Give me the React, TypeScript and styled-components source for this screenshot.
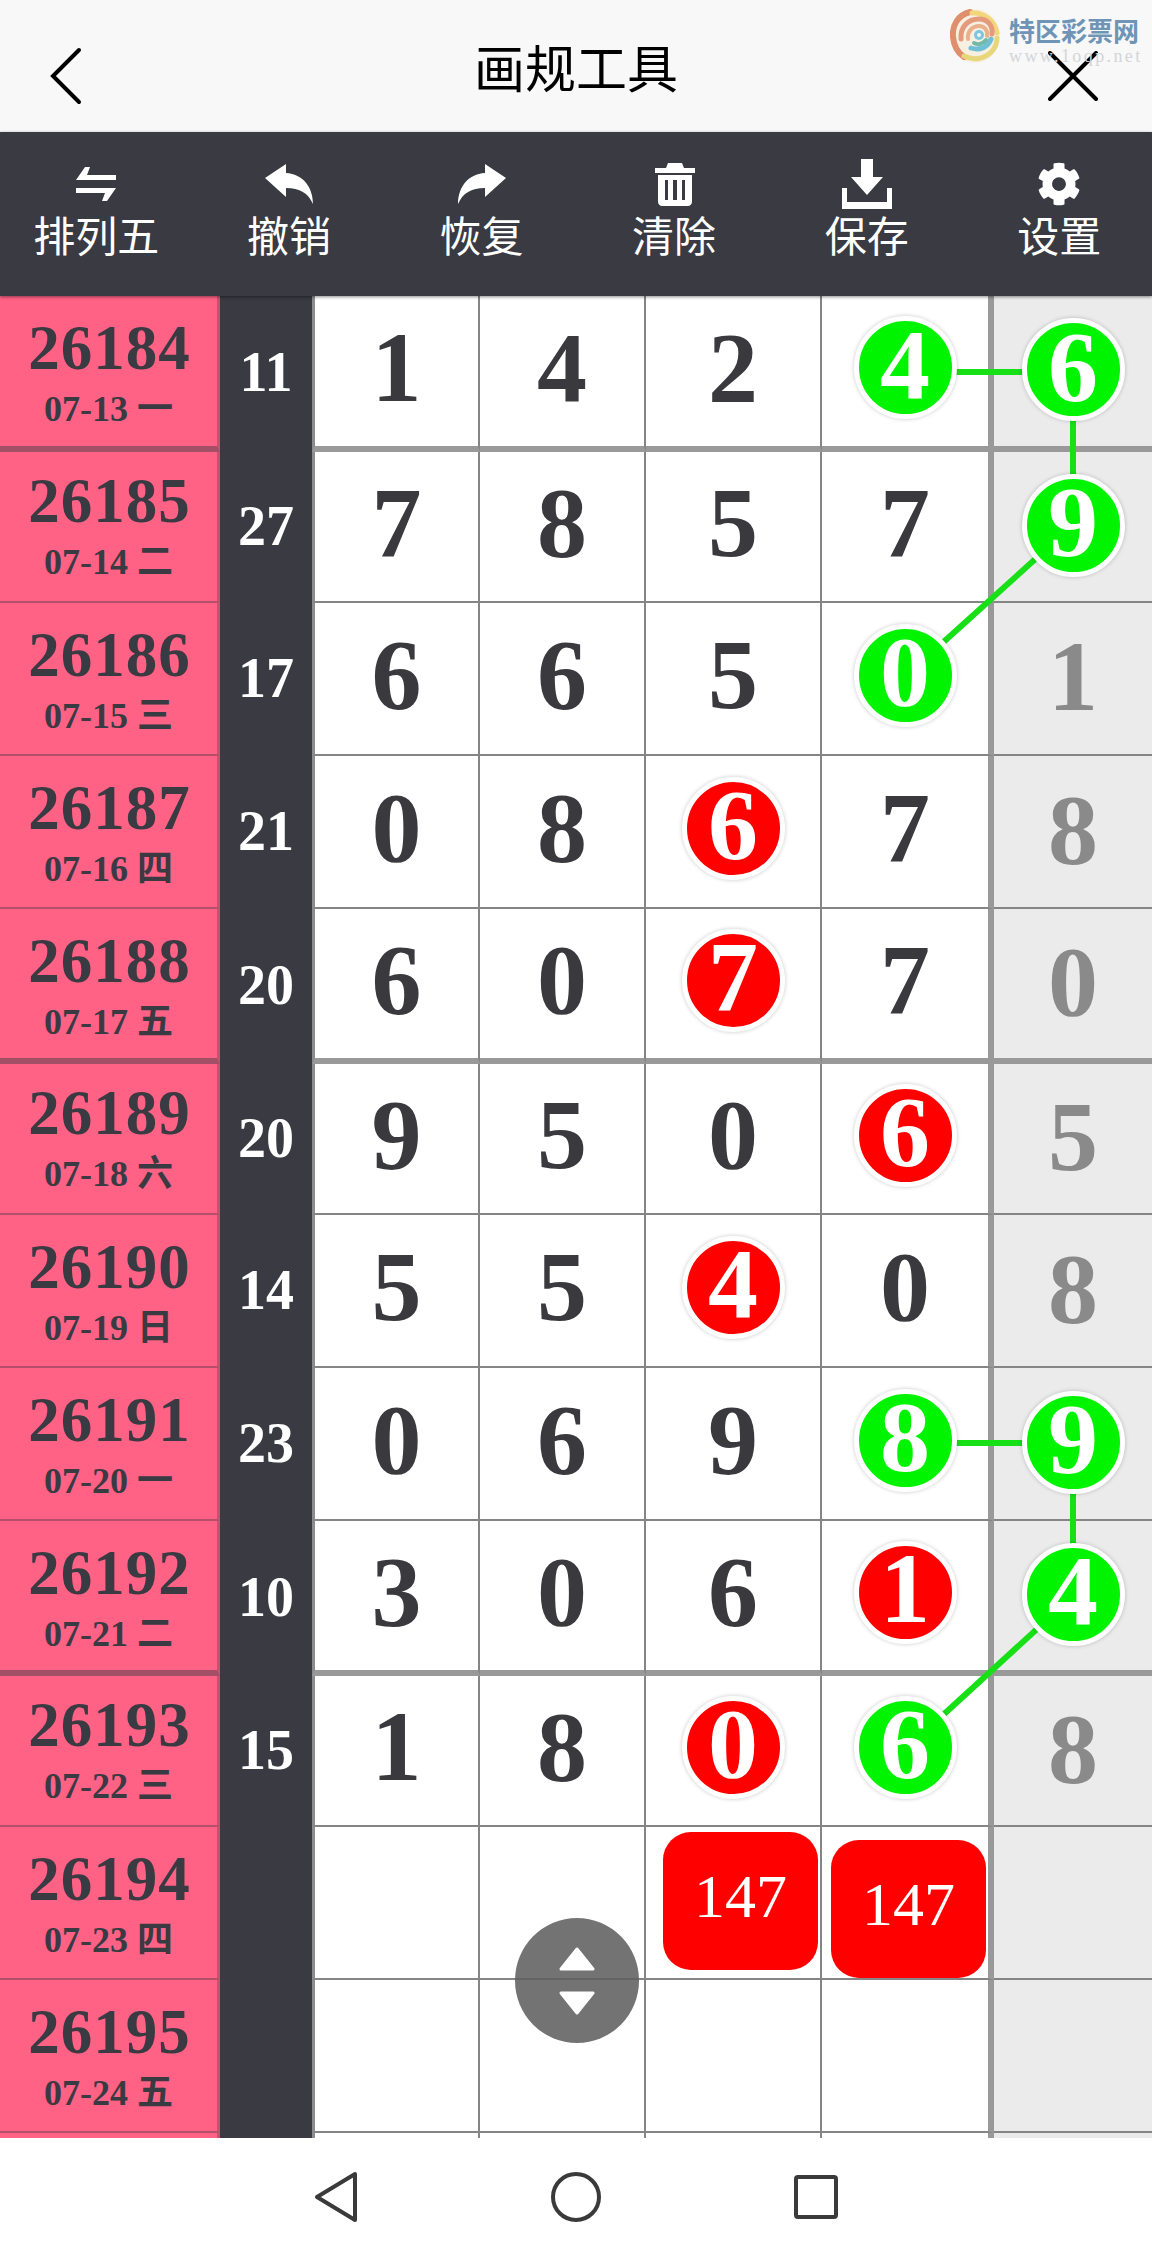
import React from 'react'
import styled, { createGlobalStyle } from 'styled-components'
import { FaCog } from 'react-icons/fa'

const SERIF = '"Liberation Serif", "Noto Sans CJK SC", serif'
const SANS = '"Noto Sans CJK SC", "Noto Sans", sans-serif'

type Ball = 'g' | 'r'
type Pick = { value: string; ball?: Ball }

const g = (value: string): Pick => ({ value, ball: 'g' })
const r = (value: string): Pick => ({ value, ball: 'r' })
const n = (value: string): Pick => ({ value })

const rows: { period: string; date: string; sum?: string; cells: Pick[]; height: number; thick?: boolean }[] = [
  { period: '26184', date: '07-13 一', sum: '11', cells: [n('1'), n('4'), n('2'), g('4'), g('6')], height: 156, thick: true },
  { period: '26185', date: '07-14 二', sum: '27', cells: [n('7'), n('8'), n('5'), n('7'), g('9')], height: 151 },
  { period: '26186', date: '07-15 三', sum: '17', cells: [n('6'), n('6'), n('5'), g('0'), n('1')], height: 153 },
  { period: '26187', date: '07-16 四', sum: '21', cells: [n('0'), n('8'), r('6'), n('7'), n('8')], height: 153 },
  { period: '26188', date: '07-17 五', sum: '20', cells: [n('6'), n('0'), r('7'), n('7'), n('0')], height: 155, thick: true },
  { period: '26189', date: '07-18 六', sum: '20', cells: [n('9'), n('5'), n('0'), r('6'), n('5')], height: 151 },
  { period: '26190', date: '07-19 日', sum: '14', cells: [n('5'), n('5'), r('4'), n('0'), n('8')], height: 153 },
  { period: '26191', date: '07-20 一', sum: '23', cells: [n('0'), n('6'), n('9'), g('8'), g('9')], height: 153 },
  { period: '26192', date: '07-21 二', sum: '10', cells: [n('3'), n('0'), n('6'), r('1'), g('4')], height: 155, thick: true },
  { period: '26193', date: '07-22 三', sum: '15', cells: [n('1'), n('8'), r('0'), g('6'), n('8')], height: 151 },
  { period: '26194', date: '07-23 四', cells: [n(''), n(''), n(''), n(''), n('')], height: 153 },
  { period: '26195', date: '07-24 五', cells: [n(''), n(''), n(''), n(''), n('')], height: 153 },
]

const tools = [
  { label: '排列五', shift: 0 },
  { label: '撤销', shift: 1 },
  { label: '恢复', shift: 1 },
  { label: '清除', shift: 2 },
  { label: '保存', shift: 0 },
  { label: '设置', shift: 0 },
]

const GlobalStyle = createGlobalStyle`
  html, body {
    margin: 0;
    padding: 0;
    background: #fff;
  }
  * {
    box-sizing: border-box;
  }
`

const Page = styled.div`
  width: 1152px;
  height: 2256px;
  overflow: hidden;
  display: flex;
  flex-direction: column;
  background: #fff;
`

const Header = styled.header`
  position: relative;
  height: 132px;
  flex: none;
  background: #f8f8f8;
  display: flex;
  align-items: center;
  justify-content: space-between;
  padding: 0 54px 0 50px;
`

const Title = styled.h1`
  position: absolute;
  left: 0;
  right: 0;
  top: 32px;
  margin: 0;
  text-align: center;
  font: 400 51px/68px ${SANS};
  color: #000;
`

const HeadIcon = styled.svg`
  display: block;
  margin-top: 19px;
`

const Logo = styled.div`
  position: absolute;
  left: 950px;
  top: 9px;
  display: flex;
  gap: 8px;
`

const LogoText = styled.div`
  display: flex;
  flex-direction: column;
`

const LogoName = styled.span`
  font: 700 26px/30px ${SANS};
  color: #6f94b5;
  margin-top: 6px;
  white-space: nowrap;
`

const LogoUrl = styled.span`
  font: 400 18px/18px ${SERIF};
  letter-spacing: 2.4px;
  color: #d3d5d8;
  margin-top: 2px;
  white-space: nowrap;
`

const Toolbar = styled.nav`
  position: relative;
  z-index: 3;
  height: 164px;
  flex: none;
  display: grid;
  grid-template-columns: repeat(6, 192.6px);
  background: #393a42;
  box-shadow: 0 1px 3px rgba(0, 0, 0, 0.45);
`

const Tool = styled.div`
  display: flex;
  flex-direction: column;
  align-items: center;
  padding-top: 27px;
  color: #fff;
`

const ToolIcon = styled.div<{ $shift: number }>`
  height: 50px;
  display: flex;
  align-items: center;
  justify-content: center;
  margin-left: ${({ $shift }) => $shift}px;
`

const ToolLabel = styled.span`
  font: 400 42px/56px ${SANS};
  margin-top: -3px;
  white-space: nowrap;
`

const Board = styled.main`
  position: relative;
  height: 1842px;
  flex: none;
  overflow: hidden;
`

const Row = styled.div<{ $height: number }>`
  display: grid;
  grid-template-columns: 220px 92px 168px 166px 176px 172px 158px;
  height: ${({ $height }) => $height}px;
`

// the row under a thick rule starts lower, so its text sits higher in the box
const PeriodCell = styled.div<{ $thick?: boolean; $afterThick?: boolean }>`
  display: flex;
  flex-direction: column;
  align-items: center;
  background: #ff6285;
  border-right: 3px solid #c3536f;
  border-bottom: ${({ $thick }) => ($thick ? '6px solid #a34f66' : '2px solid #b34f6a')};
  padding-top: ${({ $afterThick }) => ($afterThick ? '16px' : '19px')};
  color: #393a42;
`

const Period = styled.span`
  font: 700 63px/66px ${SERIF};
  letter-spacing: 1px;
  margin-left: 2px;
`

const DateLabel = styled.span`
  font: 700 36px/40px ${SERIF};
  margin-top: 8px;
  white-space: nowrap;
`

const SumCell = styled.div`
  display: flex;
  align-items: center;
  justify-content: center;
  background: #393a42;
  color: #fff;
  font: 700 56px/60px ${SERIF};
  padding-bottom: 4px;
`

const Cell = styled.div<{ $thick?: boolean; $first?: boolean; $last?: boolean; $side?: boolean }>`
  position: relative;
  display: flex;
  align-items: center;
  justify-content: center;
  background: ${({ $side }) => ($side ? '#ebebeb' : '#fff')};
  color: ${({ $side }) => ($side ? '#8a8a8a' : '#3a3a3e')};
  font: 700 100px/1 ${SERIF};
  padding-bottom: ${({ $side }) => ($side ? '3px' : '7px')};
  border-bottom: ${({ $thick }) => ($thick ? '6px solid #999' : '2px solid #858585')};
  border-left: ${({ $first }) => ($first ? '3px solid #8c8c8c' : 'none')};
  border-right: ${({ $last, $side }) => ($side ? 'none' : $last ? '6px solid #999' : '2px solid #858585')};
`

const BallMark = styled.div<{ $kind: Ball }>`
  position: relative;
  z-index: 2;
  width: 103px;
  height: 103px;
  flex: none;
  display: flex;
  align-items: center;
  justify-content: center;
  border-radius: 50%;
  border: 5px solid #fff;
  box-shadow: 0 0 4px rgba(0, 0, 0, 0.22);
  background: ${({ $kind }) => ($kind === 'g' ? '#00f400' : '#ff0000')};
  color: #fff;
  padding-bottom: 6px;
`

const Links = styled.svg`
  position: absolute;
  left: 0;
  top: 0;
  z-index: 1;
  pointer-events: none;
`

const Tag = styled.div<{ $left: number; $top: number }>`
  position: absolute;
  z-index: 2;
  left: ${({ $left }) => $left}px;
  top: ${({ $top }) => $top}px;
  width: 155px;
  height: 138px;
  border-radius: 28px;
  background: #ff0000;
  color: #fff;
  font: 400 62px/1 ${SERIF};
  display: flex;
  align-items: center;
  justify-content: center;
  padding-bottom: 10px;
`

const Scroller = styled.div`
  position: absolute;
  z-index: 4;
  left: 515px;
  top: 1622px;
  width: 124px;
  height: 125px;
  border-radius: 50%;
  background: rgba(96, 96, 96, 0.88);
  display: flex;
  flex-direction: column;
  align-items: center;
  justify-content: center;
  gap: 18px;
`

const NavBar = styled.footer`
  flex: 1;
  background: #fff;
  position: relative;
  display: flex;
  align-items: center;
`

const NavIcon = styled.svg<{ $left: number }>`
  display: block;
  margin-left: ${({ $left }) => $left}px;
`

const ToolGlyph: React.FC<{ index: number }> = ({ index }) => {
  switch (index) {
    case 0:
      return (
        <svg width="40" height="34" viewBox="0 0 40 34" fill="#fff">
          <path d="M9 0h5l-3 8h29v5H0z" />
          <path d="M0 21h40L31 34h-5l3-8H0z" />
        </svg>
      )
    case 1:
      return (
        <svg width="48" height="40" viewBox="0 0 48 40" fill="#fff">
          <path d="M0 14 21 0v9c17 1 27 14 27 31-5-11-13-16-27-16v9z" />
        </svg>
      )
    case 2:
      return (
        <svg width="48" height="40" viewBox="0 0 48 40" fill="#fff">
          <path d="M48 14 27 0v9C10 10 0 23 0 40c5-11 13-16 27-16v9z" />
        </svg>
      )
    case 3:
      return (
        <svg width="40" height="44" viewBox="0 0 40 44" fill="#fff">
          <path d="M13 1h14l2 5h11v5H0V6h11z" />
          <path fillRule="evenodd" d="M3 13h34v27c0 2-2 4-4 4H7c-2 0-4-2-4-4zm7 5v20h3V18zm8 0v20h4V18zm9 0v20h3V18z" />
        </svg>
      )
    case 4:
      return (
        <svg width="50" height="50" viewBox="0 0 50 50" fill="#fff">
          <path d="M19 0h12v18h10L25 36 9 18h10z" />
          <path d="M0 29h5v14h40V29h5v21H0z" />
        </svg>
      )
    default:
      return <FaCog size={44} color="#fff" />
  }
}

const App: React.FC = () => {
  return (
    <Page>
      <GlobalStyle />
      <Header>
        <HeadIcon width="32" height="58" viewBox="0 0 32 58" fill="none" stroke="#000" strokeWidth="4" strokeLinecap="round">
          <path d="M29 3 3 29l26 26" />
        </HeadIcon>
        <Title>画规工具</Title>
        <HeadIcon width="50" height="50" viewBox="0 0 50 50" fill="none" stroke="#000" strokeWidth="4" strokeLinecap="round">
          <path d="M2 2l46 46M48 2 2 48" />
        </HeadIcon>
        <Logo>
          <svg width="51" height="54" viewBox="0 0 51 54" fill="none" strokeLinecap="round">
            <ellipse cx="25" cy="27" rx="25" ry="27" fill="#f6efe2" />
            <path d="M20 3C8 6 2 16 3 28c1 10 5 16 11 20" stroke="#e08f6c" strokeWidth="6" />
            <path d="M22 4c12-1 23 8 25 20" stroke="#f2d67c" strokeWidth="5" />
            <path d="M14 47c10 5 22 3 29-6 3-4 4-8 4-12" stroke="#e7d77a" strokeWidth="5" />
            <path d="M11 30c-1-12 7-20 18-20 9 0 14 7 13 15" stroke="#e59a7c" strokeWidth="5" />
            <path d="M41 30c-3 8-11 12-20 9" stroke="#6fc0d4" strokeWidth="5" />
            <path d="M18 30c-1-7 4-13 11-13 6 0 9 5 8 10" stroke="#e9b08a" strokeWidth="4" />
            <path d="M36 31c-3 4-8 5-12 3" stroke="#72b9a8" strokeWidth="4" />
            <circle cx="29" cy="26" r="5" fill="#7cc6de" />
            <circle cx="29" cy="26" r="2" fill="#f4f4f4" />
          </svg>
          <LogoText>
            <LogoName>特区彩票网</LogoName>
            <LogoUrl>www.1oqp.net</LogoUrl>
          </LogoText>
        </Logo>
      </Header>

      <Toolbar>
        {tools.map((tool, i) => (
          <Tool key={tool.label}>
            <ToolIcon $shift={tool.shift}>
              <ToolGlyph index={i} />
            </ToolIcon>
            <ToolLabel>{tool.label}</ToolLabel>
          </Tool>
        ))}
      </Toolbar>

      <Board>
        <Links width="1152" height="1842" viewBox="0 0 1152 1842" stroke="#17e017" strokeWidth="6" fill="none">
          <path d="M907 76H1073V229L907 379" />
          <path d="M907 1147H1073V1300L907 1452" />
        </Links>
        {rows.map((row, i) => (
          <Row key={row.period} $height={row.height}>
            <PeriodCell $thick={row.thick} $afterThick={i > 0 && rows[i - 1].thick}>
              <Period>{row.period}</Period>
              <DateLabel>{row.date}</DateLabel>
            </PeriodCell>
            <SumCell>{row.sum}</SumCell>
            {row.cells.map((cell, c) => (
              <Cell key={c} $thick={row.thick} $first={c === 0} $last={c === 3} $side={c === 4}>
                {cell.ball ? <BallMark $kind={cell.ball}>{cell.value}</BallMark> : cell.value}
                {row.period === '26194' && c === 2 && <Tag $left={17} $top={5}>147</Tag>}
                {row.period === '26194' && c === 3 && <Tag $left={9} $top={13}>147</Tag>}
              </Cell>
            ))}
          </Row>
        ))}
        <Row $height={5}>
          <PeriodCell />
          <SumCell />
          <Cell $first />
          <Cell />
          <Cell />
          <Cell $last />
          <Cell $side />
        </Row>
        <Scroller>
          <svg width="36" height="25" viewBox="0 0 36 25" fill="#fff">
            <path d="M18 2 34 22H2z" stroke="#fff" strokeWidth="3" strokeLinejoin="round" />
          </svg>
          <svg width="36" height="25" viewBox="0 0 36 25" fill="#fff">
            <path d="M18 23 34 3H2z" stroke="#fff" strokeWidth="3" strokeLinejoin="round" />
          </svg>
        </Scroller>
      </Board>

      <NavBar>
        <NavIcon $left={314} width="44" height="52" viewBox="0 0 44 52" fill="none" stroke="#3a3a3a" strokeWidth="4" strokeLinejoin="round">
          <path d="M41 3v46L3 26z" />
        </NavIcon>
        <NavIcon $left={193} width="50" height="50" viewBox="0 0 50 50" fill="none" stroke="#3a3a3a" strokeWidth="4">
          <circle cx="25" cy="25" r="23" />
        </NavIcon>
        <NavIcon $left={193} width="44" height="44" viewBox="0 0 44 44" fill="none" stroke="#3a3a3a" strokeWidth="4" strokeLinejoin="round">
          <rect x="2" y="2" width="40" height="40" rx="2" />
        </NavIcon>
      </NavBar>
    </Page>
  )
}

export default App
